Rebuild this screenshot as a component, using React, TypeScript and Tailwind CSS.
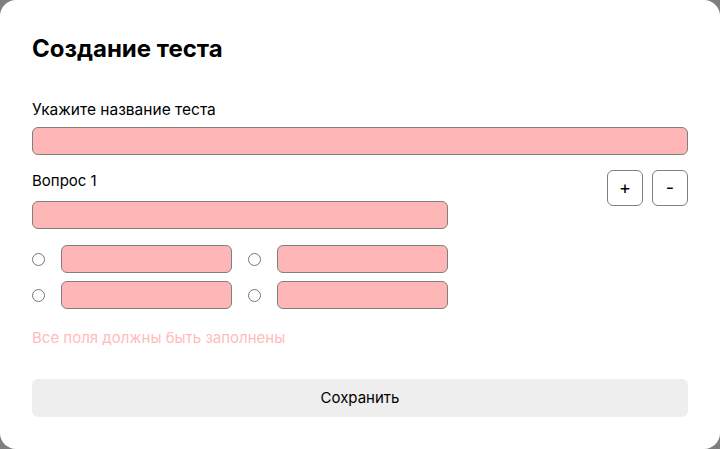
export default function App() {
  const answers = [0, 1, 2, 3];

  return (
    <div className="w-[720px] h-[449px] bg-[#7f7f7f] font-['Inter',sans-serif] text-black">
      <div className="w-full h-full bg-white rounded-[16px] px-8 pt-[34px] flex flex-col">
        {/* Title */}
        <h1 className="text-[24px] leading-[30px] font-bold">Создание теста</h1>

        {/* Test name */}
        <label className="mt-[36px] text-[15.5px] leading-[20px]">Укажите название теста</label>
        <input
          type="text"
          className="mt-[7px] h-[28px] w-full rounded-[6px] border border-[#808080] bg-[#ffb6b6] px-2 outline-none"
        />

        {/* Question */}
        <div className="mt-4 flex justify-between">
          <div className="w-[416px] flex flex-col">
            <span className="text-[15px] leading-[20px]">Вопрос 1</span>
            <input
              type="text"
              className="mt-[10px] h-[28px] w-full rounded-[6px] border border-[#808080] bg-[#ffb6b6] px-2 outline-none"
            />
            <div className="mt-4 grid grid-cols-2 gap-x-4 gap-y-2">
              {answers.map((a) => (
                <div key={a} className="flex items-center min-w-0">
                  <input type="radio" name="answer" className="m-0 w-[13px] h-[13px] shrink-0" />
                  <input
                    type="text"
                    className="ml-4 h-[28px] w-full min-w-0 rounded-[6px] border border-[#808080] bg-[#ffb6b6] px-2 outline-none"
                  />
                </div>
              ))}
            </div>
          </div>
          <div className="flex gap-[9px] -mt-px">
            <button className="w-9 h-9 rounded-[6px] border border-[#808080] text-[18px] leading-none">+</button>
            <button className="w-9 h-9 rounded-[6px] border border-[#808080] text-[18px] leading-none">-</button>
          </div>
        </div>

        {/* Error */}
        <p className="mt-[19px] text-[15px] leading-[20px] text-[#ffbcbc]">Все поля должны быть заполнены</p>

        {/* Save */}
        <button className="mt-[31px] h-[38px] w-full rounded-[6px] bg-[#eeeeee] text-[15px]">Сохранить</button>
      </div>
    </div>
  );
}
